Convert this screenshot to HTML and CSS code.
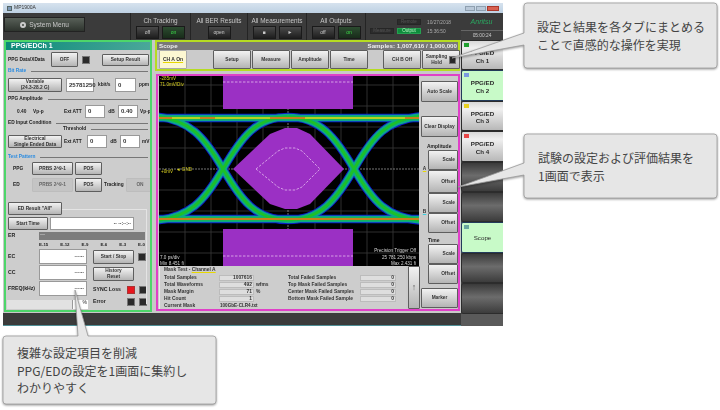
FILE: index.html
```html
<!DOCTYPE html>
<html lang="ja">
<head>
<meta charset="utf-8">
<title>MP1900A</title>
<link rel="stylesheet" href="styles.css">
</head>
<body>
<div class="window">
  <div class="titlebar">
    <span class="app-icon"></span><span>MP1900A</span>
    <div class="winctl"><i class="wc"></i><i class="wc"></i><i class="wc wc-close"></i></div>
  </div>
  <div class="shell">
    <div class="main">
      <div class="topbar">
        <div class="sysmenu"><span class="gear"></span>System Menu</div>
        <div class="tgroup tg-ch"><div class="tlabel">Ch Tracking</div><div class="tbtns"><span class="dbtn">off</span><span class="dbtn on">on</span></div></div>
        <div class="tgroup tg-ber"><div class="tlabel">All BER Results</div><div class="tbtns"><span class="dbtn">open</span></div></div>
        <div class="tgroup tg-meas"><div class="tlabel">All Measurements</div><div class="tbtns"><span class="dbtn">■</span><span class="dbtn">►</span></div></div>
        <div class="tgroup tg-out"><div class="tlabel">All Outputs</div><div class="tbtns"><span class="dbtn">off</span><span class="dbtn on">on</span></div></div>
        <div class="status">
          <div class="st-col"><span class="st blank"></span><span class="st">Measure</span></div>
          <div class="st-col"><span class="st">Remote</span><span class="st st-on">Output</span></div>
        </div>
        <div class="clock">10/27/2018<br>15:36:50</div>
      </div>
      <div class="panels">
        <section class="ppg">
          <h2 class="ppg-head">PPG/EDCh 1</h2>
          <div class="row r1"><span class="lbl w43">PPG Data/XData</span><span class="btn w27">OFF</span><span class="led ml4"></span><span class="btn w47 push">Setup Result</span></div>
          <div class="sect s-bit"><span>Bit Rate</span></div>
          <div class="row r2"><span class="btn w54 two">Variable<br>(24.3-28.2 G)</span><span class="inp w28 ml4">25781250</span><span class="lbl w17 ml4">kbit/s</span><span class="inp w21">0</span><span class="lbl ml3">ppm</span></div>
          <div class="head s-amp"><span>PPG Amplitude</span></div>
          <div class="row r3"><span class="lbl w16 ml9">0.40</span><span class="lbl w31">Vp-p</span><span class="lbl w21">Ext ATT</span><span class="inp w20">0</span><span class="lbl w13 mid">dB</span><span class="inp w20">0.40</span><span class="lbl ml2">Vp-p</span></div>
          <div class="head s-ed"><span>ED Input Condition</span></div>
          <div class="head s-th"><span>Threshold</span></div>
          <div class="row r4"><span class="btn w54 two">Electrical<br>Single Ended Data</span><span class="lbl w23 ml2">Ext ATT</span><span class="inp w20">0</span><span class="lbl w13 mid">dB</span><span class="inp w20">0</span><span class="lbl ml2">mV</span></div>
          <div class="sect s-test"><span>Test Pattern</span></div>
          <div class="row r5"><span class="lbl w19 ml5">PPG</span><span class="btn w41">PRBS 2^9-1</span><span class="btn w27 ml2">POS</span></div>
          <div class="row r6"><span class="lbl w19 ml5">ED</span><span class="btn off w41">PRBS 2^9-1</span><span class="btn w27 ml2">POS</span><span class="lbl w22 ml2">Tracking</span><span class="btn off w28">ON</span></div>
          <div class="edbox">
            <div class="row r7"><span class="btn w54">ED Result "All"</span></div>
            <div class="row r8"><span class="btn w40">Start Time</span><span class="inp w84 ml2 right">-- --:--:--</span></div>
            <div class="row r9"><span class="lbl w31 big">ER</span><span class="erbar">—</span></div>
            <div class="scale"><span>E-15</span><span>E-12</span><span>E-9</span><span>E-6</span><span>E-3</span><span>E-0</span></div>
            <div class="cols">
              <div class="meas">
                <div class="mrow"><span class="lbl w31 big">EC</span><span class="inp w48 right">------</span></div>
                <div class="mrow"><span class="lbl w31 big">CC</span><span class="inp w48 right">------</span></div>
                <div class="mrow"><span class="lbl w31 big">FREQ(kHz)</span><span class="inp w48 right">------</span></div>
              </div>
              <div class="ctl">
                <div class="crow c1"><span class="btn w41">Start / Stop</span><span class="led ml4"></span></div>
                <div class="crow c2"><span class="btn w41 two">History<br>Reset</span></div>
                <div class="crow c3"><span class="lbl w34 big">SYNC Loss</span><span class="led red"></span><span class="led ml4"></span></div>
                <div class="crow c4"><span class="lbl w34 big">Error</span><span class="led"></span><span class="led ml4"></span></div>
              </div>
            </div>
            <div class="pct"><span class="pbar"></span><span class="pval">%</span></div>
          </div>
        </section>
        <section class="scope">
          <div class="scope-top">
            <h2 class="scope-head"><span>Scope</span><span>Samples: 1,007,616 / 1,000,000</span></h2>
            <div class="toolbar">
              <span class="btn cha"><u>CH A On</u></span>
              <span class="btn tb tb-first">Setup</span><span class="btn tb">Measure</span><span class="btn tb">Amplitude</span><span class="btn tb">Time</span>
              <span class="btn tb tb-b">CH B Off</span>
              <span class="btn tb hold"><span>Sampling<br>Hold</span><span class="led"></span></span>
            </div>
          </div>
          <div class="scope-body">
            <div class="display">
              <svg class="eye" viewBox="159 77 260 190" width="260" height="190" role="img" aria-label="Eye diagram">
                <defs>
                  <path id="cu" d="M150 117C190 119 205 139 223 170S256 221 288 221S336 201 354 170S386 119 426 117"/>
                  <path id="cd" d="M150 222C190 220 205 201 223 170S256 118 288 118S336 139 354 170S386 220 426 222"/>
                  <filter id="soft" x="-5%" y="-5%" width="110%" height="110%"><feGaussianBlur stdDeviation="0.6"/></filter>
                </defs>
                <rect x="159" y="73" width="260" height="194" fill="#000"/>
                <g class="grid">
                  <path d="M185 73V267M211 73V267M237 73V267M263 73V267M315 73V267M341 73V267M367 73V267M393 73V267M159 86H419M159 107H419M159 128H419M159 149H419M159 191H419M159 212H419M159 233H419M159 254H419"/>
                </g>
                <g class="centre"><path d="M288 73V267M159 170H419"/></g>
                <g class="mask">
                  <rect x="223" y="70" width="130" height="40"/>
                  <rect x="223" y="230" width="130" height="40"/>
                  <polygon points="233,170 270,135 285,129 297,129 310,135 344,170 310,205 297,210 285,210 270,205"/>
                </g>
                <g class="mdash">
                  <path d="M223 83H353M223 257H353"/>
                  <path d="M256 170L278 152 285 149 295 149 302 152 320 170 302 188 295 191 285 191 278 188Z"/>
                </g>
                <g class="trace" filter="url(#soft)">
                  <g class="t-blue"><use href="#cu"/><use href="#cd"/><path d="M159 119H419M159 220H419"/></g>
                  <g class="t-teal"><use href="#cu"/><use href="#cd"/><path d="M159 119H419M159 220H419"/></g>
                  <g class="t-green"><use href="#cu"/><use href="#cd"/><path d="M159 119H419M159 220H419"/></g>
                  <g class="t-yellow"><path d="M159 119H419M159 220H419"/></g>
                  <g class="t-red"><path d="M159 119H172M200 119H215M270 119H305M405 119H419M159 220H419"/></g>
                </g>
                <g class="ytxt">
                  <text x="160" y="81">-285mV</text><text x="160" y="87">71.0mV/Div</text>
                  <text x="161" y="174">+0mV</text><text x="176" y="172">◄ GND</text>
                </g>
                <g class="wtxt">
                  <text x="160" y="260">7.0 ps/div</text><text x="160" y="266">Min 8.451 fi</text>
                  <text x="416" y="253" text-anchor="end">Precision Trigger Off</text>
                  <text x="416" y="260" text-anchor="end">25 781 250 kbps</text>
                  <text x="416" y="266" text-anchor="end">Max 2.431 fi</text>
                </g>
              </svg>
              <div class="mask-wrap">
                <div class="masktest">
                  <div class="mt-title">Mask Test - <u>Channel A</u></div>
                  <div class="mt-cols">
                    <div class="mt-col c-l">
                      <div class="mt-row"><span>Total Samples</span><b>1007616</b></div>
                      <div class="mt-row"><span>Total Waveforms</span><b>492</b><em>wfms</em></div>
                      <div class="mt-row"><span>Mask Margin</span><b>71</b><em>%</em></div>
                      <div class="mt-row"><span>Hit Count</span><b>1</b></div>
                      <div class="mt-row"><span>Current Mask</span><strong>100GbE-CLR4.txt</strong></div>
                    </div>
                    <div class="mt-col c-r">
                      <div class="mt-row"><span>Total Failed Samples</span><b>0</b></div>
                      <div class="mt-row"><span>Top Mask Failed Samples</span><b>0</b></div>
                      <div class="mt-row"><span>Center Mask Failed Samples</span><b>0</b></div>
                      <div class="mt-row"><span>Bottom Mask Failed Sample</span><b>0</b></div>
                    </div>
                  </div>
                </div>
                <span class="btn uparrow">↑</span>
              </div>
            </div>
            <div class="rail">
              <span class="btn rb auto">Auto Scale</span>
              <span class="btn rb clear">Clear Display</span>
              <div class="rhead">Amplitude</div>
              <div class="pair pair-a"><span class="tag tag-a">A</span><div class="stack"><span class="btn sb">Scale</span><span class="btn sb">Offset</span></div></div>
              <div class="pair"><span class="tag tag-b">B</span><div class="stack"><span class="btn sb">Scale</span><span class="btn sb">Offset</span></div></div>
              <div class="rhead rtime">Time</div>
              <div class="pair"><span class="tag"></span><div class="stack"><span class="btn sb">Scale</span><span class="btn sb">Offset</span></div></div>
              <span class="btn rb marker">Marker</span>
            </div>
          </div>
        </section>
      </div>
      <div class="footer"></div>
    </div>
    <aside class="side">
      <div class="logo">Anritsu</div>
      <div class="timer">05:00:24</div>
      <div class="tab"><i class="chip green"></i>PPG/ED<br>Ch 1</div>
      <div class="tab active"><i class="chip blue"></i>PPG/ED<br>Ch 2</div>
      <div class="tab"><i class="chip yellow"></i>PPG/ED<br>Ch 3</div>
      <div class="tab"><i class="chip redc"></i>PPG/ED<br>Ch 4</div>
      <div class="tab dark"></div>
      <div class="tab dark"></div>
      <div class="tab active tab-scope"><i class="chip teal"></i>Scope</div>
      <div class="tab dark"></div>
      <div class="tab dark"></div>
    </aside>
  </div>
</div>
<svg class="bubbles" viewBox="0 0 720 410" width="720" height="410" aria-hidden="true">
  <path d="M527 3H714a3 3 0 0 1 3 3V65a3 3 0 0 1-3 3H527a3 3 0 0 1-3-3V45L452 58 524 33V6a3 3 0 0 1 3-3Z"/>
  <path d="M527 134H714a3 3 0 0 1 3 3V195a3 3 0 0 1-3 3H527a3 3 0 0 1-3-3V175L458 187 524 163V137a3 3 0 0 1 3-3Z"/>
  <path d="M6 336H78L75 290 88 336H213a3 3 0 0 1 3 3V401a3 3 0 0 1-3 3H6a3 3 0 0 1-3-3V339a3 3 0 0 1 3-3Z"/>
</svg>
<p class="note n1">設定と結果を各タブにまとめる<br>ことで直感的な操作を実現</p>
<p class="note n2">試験の設定および評価結果を<br>1画面で表示</p>
<p class="note n3">複雑な設定項目を削減<br>PPG/EDの設定を1画面に集約し<br>わかりやすく</p>
</body>
</html>
```

FILE: styles.css
```css
* { box-sizing: border-box; }
html, body { margin: 0; padding: 0; background: #fff; }
body { width: 720px; height: 410px; position: relative; overflow: hidden; font-family: "Liberation Sans", Arial, sans-serif; }
.window { position: relative; width: 500px; height: 323px; margin: 3px 0 0 3px; background: #3b3b3b; filter: blur(0.3px); color: #222; font-size: 5px; line-height: 1.1; }
.titlebar { height: 10px; display: flex; align-items: center; gap: 2px; padding: 0 4px; background: linear-gradient(#d6e2ee, #bed1e3); color: #333; font-size: 5px; }
.app-icon { width: 5px; height: 5px; background: #7d98b5; border: 1px solid #566; }
.winctl { margin-left: auto; display: flex; gap: 1px; }
.wc { display: block; width: 10px; height: 5px; background: #b9c8d8; border: 1px solid #8fa0b0; }
.wc-close { width: 12px; background: #d86050; border-color: #a8382c; }
.shell { display: flex; height: 313px; }
.main { width: 458px; display: flex; flex-direction: column; }
.topbar { height: 27px; display: flex; background: #3b3b3b; padding-left: 1px; color: #c6c6c6; }
.sysmenu { width: 81px; height: 15px; margin-top: 4px; display: flex; align-items: center; justify-content: center; gap: 3px; background: linear-gradient(#586058, #2e342e); border: 1px solid #222; font-size: 6.5px; color: #c8c8c8; }
.gear { width: 6px; height: 6px; border-radius: 50%; border: 2px solid #ccc; }
.tgroup { height: 27px; border-left: 1px solid #242424; padding-top: 4px; }
.tlabel { text-align: center; font-size: 6.4px; height: 8px; white-space: nowrap; }
.tbtns { display: flex; justify-content: center; gap: 3px; margin-top: 1px; }
.dbtn { width: 23px; height: 13px; display: flex; align-items: center; justify-content: center; background: linear-gradient(#4a4a4a, #1e1e1e); border: 1px solid #1a1a1a; color: #ccc; font-size: 5px; }
.dbtn.on { color: #3ddc4a; background: linear-gradient(#2c4c30, #182c1a); }
.tg-ch { margin-left: 45px; width: 60px; }
.tg-ber { width: 57px; }
.tg-meas { width: 59px; }
.tg-out { width: 59px; }
.status { display: flex; gap: 3px; width: 62px; padding: 6px 0 0 4px; border-left: 1px solid #242424; }
.st-col { display: flex; flex-direction: column; gap: 3px; }
.st { width: 24px; height: 6px; display: flex; align-items: center; justify-content: center; background: #2c2c2c; border: 1px solid #262626; color: #555; font-size: 4.5px; }
.blank { visibility: hidden; }
.st-on { background: #0e8c3c; color: #bff5c8; border-color: #25a050; }
.clock { padding-top: 5px; color: #aaa; font-size: 4.8px; line-height: 9px; white-space: nowrap; }
.panels { height: 273px; display: flex; background: #c8c8c8; padding-left: 1px; }
.ppg { width: 148px; height: 272px; border: 2px solid #4dd66a; background: #cdcdcd; overflow: hidden; }
.ppg-head { margin: 0; height: 8px; padding-left: 5px; background: linear-gradient(90deg, #0b8a78, #4aa89a); color: #fff; font-size: 7px; line-height: 8px; }
.row { display: flex; align-items: center; padding-left: 2px; white-space: nowrap; }
.lbl { font-weight: bold; font-size: 4.8px; white-space: nowrap; flex: none; }
.big { font-size: 5.2px; }
.mid { text-align: center; }
.btn { flex: none; display: flex; align-items: center; justify-content: center; height: 100%; text-align: center; background: linear-gradient(#f2f2f2, #b4b4b4); border: 1px solid #5e5e5e; border-radius: 1px; font-weight: bold; font-size: 4.8px; color: #333; white-space: nowrap; }
.btn.off { background: #c4c4c4; border-color: #bdbdbd; color: #666; }
.inp { flex: none; height: 100%; display: flex; align-items: center; padding-left: 2px; background: #fff; border: 1px solid #999; font-size: 6px; font-weight: bold; color: #333; }
.right { justify-content: flex-end; padding: 0 2px; font-size: 4.8px; }
.led { flex: none; width: 8px; height: 8px; background: #2a2a2a; border: 1px solid #777; }
.led.red { background: #e8161e; border-color: #a33; }
.w13 { width: 13px; } .w16 { width: 16px; } .w17 { width: 17px; } .w19 { width: 19px; } .w20 { width: 20px; } .w21 { width: 21px; } .w22 { width: 22px; } .w23 { width: 23px; } .w27 { width: 27px; } .w28 { width: 28px; } .w31 { width: 31px; } .w34 { width: 34px; } .w40 { width: 40px; } .w41 { width: 41px; } .w43 { width: 43px; } .w47 { width: 47px; } .w48 { width: 48px; } .w54 { width: 54px; } .w84 { width: 84px; }
.ml2 { margin-left: 2px; } .ml3 { margin-left: 3px; } .ml4 { margin-left: 4px; } .ml5 { margin-left: 5px; } .ml9 { margin-left: 9px; }
.push { margin-left: auto; margin-right: 1px; height: 12px; }
.two { line-height: 5.6px; }
.sect, .head { height: 6px; display: flex; align-items: center; gap: 5px; padding-left: 2px; font-size: 4.8px; font-weight: bold; white-space: nowrap; }
.sect::after, .head::after { content: ""; flex: 1; height: 1px; background: #777; margin-right: 2px; }
.sect { color: #2a8be0; }
.r1 { height: 15px; margin-top: 2px; }
.s-bit { margin-top: 1px; }
.r2 { height: 14px; margin-top: 4px; }
.s-amp { margin-top: 4px; }
.r3 { height: 13px; margin-top: 3px; }
.s-ed { margin-top: 2px; }
.s-th { padding-left: 57px; }
.r4 { height: 13px; margin-top: 3px; }
.s-test { margin-top: 6px; }
.r5 { height: 13px; margin-top: 2px; }
.r6 { height: 14px; margin-top: 3px; }
.edbox { margin-top: 10px; position: relative; }
.edbox::before { content: ""; position: absolute; left: 56px; right: 3px; top: 7px; bottom: 5px; border: 1px solid #e4e4e4; border-left: 0; border-bottom: 0; }
.r7 { height: 13px; position: relative; }
.r8 { height: 13px; margin-top: 2px; position: relative; }
.r9 { height: 8px; margin-top: 2px; }
.erbar { width: 106px; height: 8px; background: #7d7d7d; color: #ddd; padding-left: 1px; font-size: 5px; }
.scale { display: flex; justify-content: space-between; margin: 3px 5px 0 33px; height: 5px; font-size: 4.4px; font-weight: bold; }
.cols { display: flex; margin-top: 1px; }
.meas { display: flex; flex-direction: column; width: 87px; padding-left: 2px; }
.mrow { height: 15px; margin-bottom: 1px; display: flex; align-items: center; }
.ctl { display: flex; flex-direction: column; }
.crow { display: flex; align-items: center; }
.c1 { height: 14px; margin-top: 1px; }
.c2 { height: 14px; margin-top: 3px; }
.c3 { height: 8px; margin-top: 5px; }
.c4 { height: 8px; margin-top: 4px; }
.pct { display: flex; margin: -6px 0 0 1px; height: 9px; width: 81px; }
.pbar { width: 65px; background: #e2e2e2; }
.pval { width: 16px; background: #fff; border-left: 1px solid #999; text-align: right; padding-right: 1px; font-size: 5px; }
.scope { width: 305px; margin-left: 3px; }
.scope-top { height: 31px; border: 2px solid #b6dc22; background: #cbcbcb; }
.scope-head { margin: 0; height: 8px; display: flex; justify-content: space-between; padding: 0 1px 0 2px; background: #787878; color: #eee; font-size: 6.2px; line-height: 8px; }
.toolbar { height: 19px; display: flex; padding-left: 2px; }
.tb { width: 38px; margin-left: 1px; }
.cha { width: 28px; background: #fdf8d2; border-color: #aaa; font-size: 5px; }
.cha u { text-decoration-color: #e8d800; text-decoration-thickness: 1px; }
.tb-first { margin-left: 26px; }
.tb-b { margin-left: 15px; }
.hold { gap: 2px; }
.hold .led { width: 7px; height: 8px; }
.scope-body { height: 237px; margin: 3px 0 0 1px; display: flex; border: 2px solid #e040c8; background: #cbcbcb; }
.display { width: 262px; padding-left: 1px; }
.eye { display: block; }
.grid path { stroke: #3a3a3a; stroke-width: 0.8; fill: none; }
.centre path { stroke: #aaa; stroke-width: 0.7; stroke-dasharray: 2 1; fill: none; }
.mask rect, .mask polygon { fill: #9b30c4; }
.mdash path { stroke: #eecdf5; stroke-width: 0.7; stroke-dasharray: 2.5 1.5; fill: none; }
.trace path, .trace use { fill: none; }
.t-blue { stroke: #0c1cc8; stroke-width: 8.5; }
.t-teal { stroke: #0aa888; stroke-width: 6.6; }
.t-green { stroke: #1cc02c; stroke-width: 3; }
.t-yellow { stroke: #b8d020; stroke-width: 1.8; }
.t-red { stroke: #d8301c; stroke-width: 1.2; }
.ytxt text { fill: #d8d020; font-size: 4.6px; }
.wtxt text { fill: #d4d4d4; font-size: 4.6px; }
.mask-wrap { height: 43px; display: flex; gap: 2px; }
.masktest { width: 248px; height: 43px; padding: 1px 3px 0 4px; border-left: 1px solid #eee; background: #cdcdcd; font-size: 4.9px; font-weight: bold; color: #333; }
.mt-title { height: 6px; line-height: 6px; }
.mt-title u { text-decoration-color: #e8d800; }
.mt-cols { display: flex; margin-top: 1px; }
.mt-col { display: flex; flex-direction: column; }
.c-l { width: 124px; }
.mt-row { height: 7px; display: flex; align-items: center; white-space: nowrap; }
.mt-row span { flex: none; }
.mt-row b { height: 6px; background: #dedede; border: 1px solid #bcbcbc; text-align: right; padding-right: 1px; line-height: 4px; }
.c-l span { width: 55px; }
.c-l b { width: 35px; }
.c-l em { font-style: normal; margin-left: 2px; }
.c-l strong { margin-left: 1px; font-size: 4.6px; }
.c-r span { width: 72px; }
.c-r b { width: 36px; }
.uparrow { width: 12px; height: 43px; font-size: 9px; font-weight: normal; color: #666; }
.rail { flex: 1; padding-left: 1px; display: flex; flex-direction: column; align-items: stretch; }
.rb { height: 21px; flex: none; }
.auto { margin-top: 5px; }
.clear { margin-top: 14px; }
.rhead { height: 6px; margin-top: 7px; padding-left: 6px; font-size: 5px; font-weight: bold; }
.rtime { margin-top: 5px; padding-left: 7px; }
.pair { display: flex; }
.tag { width: 7px; display: flex; justify-content: center; padding-top: 16px; font-size: 4.8px; font-weight: bold; }
.tag-a { color: #333; text-decoration: underline #e8d800; }
.tag-b { color: #333; text-decoration: underline #38d0e0; }
.stack { flex: 1; display: flex; flex-direction: column; }
.sb { height: 20px; justify-content: flex-end; padding-right: 2px; }
.pair-a .sb + .sb { height: 23px; }
.marker { margin-top: 4px; height: 20px; }
.footer { height: 13px; background: #3b3b3b; border-bottom: 1px solid #4f8f96; }
.side { width: 42px; background: #5a5a5a; display: flex; flex-direction: column; align-items: stretch; position: relative; }
.logo { height: 17px; margin-left: -1px; background: #3b3b3b; color: #2aa860; font-style: italic; font-size: 7px; text-align: center; line-height: 17px; }
.timer { height: 10px; text-align: center; color: #ccc; font-size: 4.8px; line-height: 10px; background: #3f3f3f; border-top: 1px solid #666; }
.tab { position: relative; height: 30.4px; flex: none; padding-top: 8px; text-align: center; font-size: 6.2px; font-weight: bold; line-height: 7.5px; color: #2a2a2a; background: linear-gradient(#d8d8d8, #f0f0f0 25%, #b8b8b8); border: 1px solid #2c2c2c; border-right: 0; border-radius: 2px 0 0 2px; }
.tab.active { background: #c8fac8; border: 1px solid #223a5a; border-right: 0; }
.tab-scope { padding-top: 11px; font-weight: normal; }
.tab.dark { background: linear-gradient(#3a3a3a, #6c6c6c 45%, #3c3c3c); }
.chip { position: absolute; left: 2px; top: 2px; width: 5px; height: 4px; }
.green { background: #20a030; } .blue { background: #7a9ae0; } .yellow { background: #e8d020; } .redc { background: #e84848; } .teal { background: #6aa8a0; }
.bubbles { position: absolute; left: 0; top: 0; }
.bubbles path { fill: #e6e6e6; stroke: #9a9a9a; stroke-width: 0.8; filter: drop-shadow(0 1.5px 1px rgba(0,0,0,.4)); }
.note { position: absolute; margin: 0; font-family: "Noto Sans CJK JP", "Noto Sans", sans-serif; font-size: 12px; line-height: 17.5px; color: #444; white-space: nowrap; }
.n1 { left: 537px; top: 18px; }
.n2 { left: 538px; top: 149px; }
.n3 { left: 17px; top: 344px; }
```
